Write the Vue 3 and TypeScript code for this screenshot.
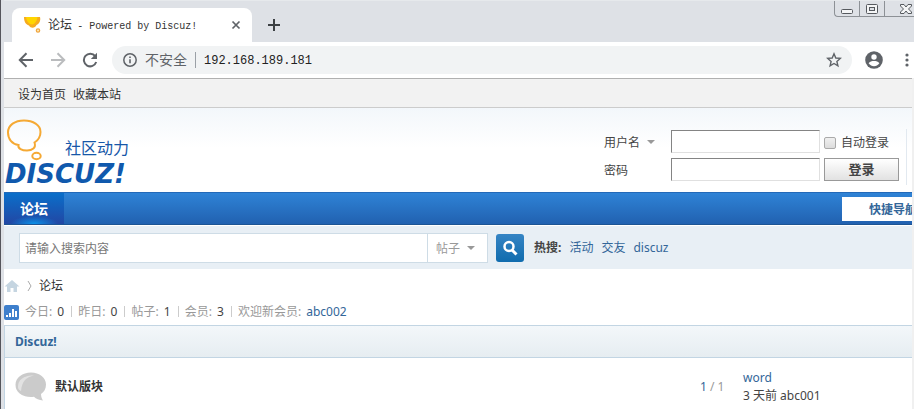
<script setup lang="ts">
import { ref } from 'vue'

interface Stat {
  label: string
  value: string
}

const username = ref('')
const password = ref('')
const remember = ref(false)
const keyword = ref('')

const stats: Stat[] = [
  { label: '今日', value: '0' },
  { label: '昨日', value: '0' },
  { label: '帖子', value: '1' },
  { label: '会员', value: '3' },
  { label: '欢迎新会员', value: 'abc002' },
]
const hotWords: string[] = ['活动', '交友', 'discuz']
</script>

<template>
  <div class="window">
    <header class="chrome">
      <div class="tabstrip">
        <div class="tab">
          <svg class="favicon" width="18" height="18" viewBox="0 0 18 18" aria-hidden="true">
            <path d="M1 1H17C18 5 16 8 13.500 9C12 12.500 7.500 12.500 6 9.500C2.500 8.500 1 5 1 1Z" fill="#f6ab1e" />
            <path d="M3 1H14.500C14 5 12 8 9 8.500C5.500 8 3.500 5 3 1Z" fill="#ffd500" />
            <circle cx="15" cy="14.500" r="1.700" fill="#fde6b0" stroke="#f0a640" stroke-width="1.200" />
          </svg>
          <span class="tab-title">论坛 <span class="mono">- Powered by Discuz!</span></span>
          <button class="icon-btn" type="button" aria-label="关闭标签页">
            <svg width="10" height="10" viewBox="0 0 10 10"><path d="M1.500 1.500L8.500 8.500M8.500 1.500L1.500 8.500" stroke="#5f6368" stroke-width="1.700" /></svg>
          </button>
        </div>
        <button class="icon-btn new-tab" type="button" aria-label="新标签页">
          <svg width="12" height="12" viewBox="0 0 12 12"><path d="M6 0V12M0 6H12" stroke="#3c4043" stroke-width="2" /></svg>
        </button>
        <div class="win-controls">
          <button type="button" aria-label="最小化">
            <svg width="12" height="16" viewBox="0 0 12 16"><rect x=".5" y="8.500" width="11" height="4" rx="1" fill="#f4f5f6" stroke="#55595e" /></svg>
          </button>
          <button type="button" aria-label="最大化">
            <svg width="12" height="16" viewBox="0 0 12 16"><rect x=".5" y="3.500" width="11" height="9" rx="1" fill="#f4f5f6" stroke="#55595e" /><rect x="3.500" y="6.500" width="5" height="3" fill="#dee1e6" stroke="#55595e" /></svg>
          </button>
          <button type="button" class="win-close" aria-label="关闭">
            <svg width="12" height="16" viewBox="0 0 12 16"><path d="M.5 3.500H4L6 6L8 3.500H11.500V5L8.500 8L11.500 11V12.500H8L6 10L4 12.500H.5V11L3.500 8L.5 5Z" fill="#f4f5f6" stroke="#55595e" /></svg>
          </button>
        </div>
      </div>
      <div class="toolbar">
        <button class="icon-btn" type="button" aria-label="后退">
          <svg width="16" height="16" viewBox="0 0 16 16" fill="none" stroke="#5f6368" stroke-width="2"><path d="M15 8H2M8.500 1.300L1.800 8L8.500 14.700" /></svg>
        </button>
        <button class="icon-btn" type="button" aria-label="前进">
          <svg width="16" height="16" viewBox="0 0 16 16" fill="none" stroke="#babcbe" stroke-width="2"><path d="M1 8H14M7.500 1.300L14.200 8L7.500 14.700" /></svg>
        </button>
        <button class="icon-btn" type="button" aria-label="刷新">
          <svg width="16" height="16" viewBox="0 0 16 16" fill="none"><path d="M13.200 4.200A6.300 6.300 0 1 0 14.200 10" stroke="#5f6368" stroke-width="2" /><path d="M15 .8V7H8.800Z" fill="#5f6368" /></svg>
        </button>
        <div class="omnibox">
          <svg width="14" height="14" viewBox="0 0 14 14" fill="none"><circle cx="7" cy="7" r="6.200" stroke="#5f6368" stroke-width="1.500" /><path d="M7 6.200V10.300M7 3.600V5.100" stroke="#5f6368" stroke-width="1.600" /></svg>
          <span class="insecure">不安全</span>
          <span class="url mono">192.168.189.181</span>
          <button class="icon-btn" type="button" aria-label="收藏">
            <svg width="16" height="16" viewBox="0 0 16 16"><path d="M8 1.800L9.800 6L14.300 6.400L10.900 9.400L11.900 13.900L8 11.500L4.100 13.900L5.100 9.400L1.700 6.400L6.200 6Z" fill="none" stroke="#5f6368" stroke-width="1.400" /></svg>
          </button>
        </div>
        <button class="icon-btn" type="button" aria-label="用户">
          <svg width="18" height="18" viewBox="0 0 18 18"><circle cx="9" cy="9" r="8.800" fill="#5f6368" /><circle cx="9" cy="6" r="2.700" fill="#fff" /><path d="M3.600 12.200C4.500 10.500 7 9.900 9 9.900S13.500 10.500 14.400 12.200C13 14.300 11 15.200 9 15.200S5 14.300 3.600 12.200Z" fill="#fff" /></svg>
        </button>
        <button class="icon-btn menu" type="button" aria-label="菜单">
          <svg width="4" height="16" viewBox="0 0 4 16" fill="#5f6368"><circle cx="2" cy="3" r="1.600" /><circle cx="2" cy="8" r="1.600" /><circle cx="2" cy="13" r="1.600" /></svg>
        </button>
      </div>
    </header>

    <div class="page">
      <div class="topbar">
        <a href="#">设为首页</a>
        <a href="#">收藏本站</a>
      </div>

      <div class="masthead">
        <a class="logo" href="#" aria-label="Discuz! 社区动力">
          <svg width="134" height="76" viewBox="0 0 134 76">
            <g fill="none" stroke="#f5a934" stroke-width="2">
              <path d="M14.500 31C8 30 4 25 4 18.500C4 11 11 6.500 20 6.500S36.500 11 36.500 18C36.500 22 34.500 26 30.500 28.500C32.500 34 28 36.500 23 36.500S13.500 34.500 14.500 31Z" />
              <ellipse cx="32.500" cy="42" rx="4.200" ry="3.200" />
            </g>
            <text class="logo-tag" x="61" y="40">社区动力</text>
            <text class="logo-name" x="1" y="69">DISCUZ!</text>
          </svg>
        </a>
        <form class="login" @submit.prevent>
          <label class="field-label" for="username">用户名 <i class="caret"></i></label>
          <input id="username" v-model="username" class="field" type="text" />
          <label class="remember"><input v-model="remember" type="checkbox" />自动登录</label>
          <label class="field-label" for="password">密码</label>
          <input id="password" v-model="password" class="field" type="password" />
          <button class="submit" type="submit">登录</button>
        </form>
      </div>

      <nav class="nav">
        <a class="nav-item" href="#">论坛</a>
        <button class="quick" type="button">快捷导航</button>
      </nav>

      <form class="search" @submit.prevent>
        <div class="search-box">
          <input v-model="keyword" type="text" placeholder="请输入搜索内容" aria-label="请输入搜索内容" />
          <button class="search-type" type="button">帖子 <i class="caret"></i></button>
        </div>
        <button class="search-btn" type="submit" aria-label="搜索">
          <svg width="28" height="28" viewBox="0 0 28 28" fill="none" stroke="#fff"><circle cx="13" cy="12.500" r="4.500" stroke-width="2.500" /><path d="M16 16L20.500 20.500" stroke-width="3" /></svg>
        </button>
        <div class="hot">
          <strong>热搜:</strong>
          <a v-for="word in hotWords" :key="word" href="#">{{ word }}</a>
        </div>
      </form>

      <div class="crumbs">
        <a href="#" aria-label="首页">
          <svg width="16" height="14" viewBox="0 0 16 14"><path d="M8 1L15.500 7.500H13V13H9.500V9H6.500V13H3V7.500H.5Z" fill="#c5d5e1" /></svg>
        </a>
        <svg width="5" height="12" viewBox="0 0 5 12" fill="none" stroke="#aaa"><path d="M1 1L4 6L1 11" /></svg>
        <a href="#">论坛</a>
      </div>

      <div class="stats">
        <svg width="15" height="15" viewBox="0 0 15 15"><rect width="15" height="15" rx="2" fill="#3e7fcc" /><path d="M2 10H4V12H2ZM5 8H7V12H5ZM8 4H10V12H8ZM11 6H13V12H11Z" fill="#fff" /></svg>
        <ul>
          <li v-for="stat in stats" :key="stat.label">{{ stat.label }}: <em>{{ stat.value }}</em></li>
        </ul>
      </div>

      <section class="forum">
        <h2><a href="#">Discuz!</a></h2>
        <table>
          <tbody>
            <tr>
              <td class="col-icon">
                <svg width="32" height="29" viewBox="0 0 32 29">
                  <path d="M16 .5C24.500 .5 31 5.500 31 12.500C31 17 29 20 26 22C26 25 27 27 28 28.500C24 28 21 27 19 24.800C8 26 .5 21 .5 12.800C.5 5.500 7.500 .5 16 .5Z" fill="#cbcbcb" />
                  <path d="M3 15C3 8 8 3.500 19 3.500C11 5.500 7 9 6 19C4 18 3 17 3 15Z" fill="#e2e2e2" />
                </svg>
              </td>
              <td class="col-name"><a href="#">默认版块</a></td>
              <td class="col-count"><b>1</b> / 1</td>
              <td class="col-last"><a href="#">word</a><br />3 天前 <span>abc001</span></td>
            </tr>
          </tbody>
        </table>
      </section>
    </div>
  </div>
</template>

<style>
body {
  margin: 0;
  overflow: hidden;
  background: #f0f0f0;
}
</style>

<style scoped>
* {
  box-sizing: border-box;
}
.window {
  display: flex;
  flex-direction: column;
  min-height: 100vh;
  border-left: 1px solid #55555c;
  padding-left: 3px;
  background: #dee1e6;
  color: #444;
  font: 12px/18px 'Noto Sans', 'Noto Sans CJK SC', sans-serif;
}
a {
  color: inherit;
  text-decoration: none;
}
button {
  font: inherit;
  color: inherit;
  padding: 0;
  border: 0;
  background: none;
}
svg {
  display: block;
  flex: none;
}
.mono {
  font-family: 'Liberation Mono', monospace;
}
.tabstrip {
  display: flex;
  align-items: flex-end;
  height: 42px;
  padding-left: 8px;
  border-top: 1px solid #e6e9ec;
}
.tab {
  display: flex;
  align-items: center;
  width: 240px;
  height: 34px;
  padding: 0 11px;
  border-radius: 8px 8px 0 0;
  background: #fff;
}
.tab-title {
  flex: 1;
  margin-left: 7px;
  padding-top: 2px;
  color: #333;
  white-space: nowrap;
}
.tab-title .mono {
  margin-left: 2px;
  font-size: 10px;
}
.new-tab {
  margin: 0 16px 11px;
}
.win-controls {
  display: flex;
  align-self: flex-start;
  margin-left: auto;
  height: 16px;
  overflow: hidden;
  border: 1px solid #8d9196;
  border-width: 0 0 1px 1px;
  border-bottom-left-radius: 4px;
}
.win-controls button {
  display: flex;
  justify-content: center;
  width: 25px;
  border-right: 1px solid #8d9196;
}
.win-controls .win-close {
  width: 29px;
  padding-left: 12px;
  border: 0;
}
.toolbar {
  display: flex;
  align-items: center;
  gap: 16px;
  height: 36px;
  padding: 0 5px 0 14px;
  background: #fff;
}
.menu {
  margin-left: 6px;
}
.omnibox {
  display: flex;
  align-items: center;
  flex: 1;
  height: 28px;
  margin: 0 -3px 0 -2px;
  padding: 0 10px 0 11px;
  border-radius: 14px;
  background: #f1f3f4;
}
.insecure {
  margin-left: 8px;
  padding-right: 8px;
  border-right: 1px solid #9aa0a6;
  color: #5f6368;
  font-size: 14px;
  line-height: 16px;
}
.url {
  flex: 1;
  margin-left: 8px;
  padding-top: 2px;
  color: #222;
}
.page {
  flex: 1;
  display: flex;
  flex-direction: column;
  border-right: 2px solid #f0f0f0;
  background: #fff;
}
.topbar {
  display: flex;
  align-items: center;
  gap: 7px;
  height: 30px;
  padding: 3px 0 0 14px;
  border-top: 1px solid #b0b0b0;
  border-bottom: 1px solid #ccc;
  background: #f2f2f2;
  color: #333;
}
.masthead {
  display: flex;
  justify-content: space-between;
  height: 84px;
  background: linear-gradient(#f3f7fb, #fff 40px);
}
.logo {
  padding-top: 6px;
}
.logo-tag {
  fill: #1657a8;
  font: 16px 'Liberation Sans', 'Noto Sans CJK SC', sans-serif;
}
.logo-name {
  fill: #1059ad;
  font: italic bold 26px 'DejaVu Sans', sans-serif;
}
.login {
  display: grid;
  grid-template-columns: 63px 149px 75px;
  grid-auto-rows: 24px;
  align-items: center;
  align-content: start;
  gap: 4px;
  height: 56px;
  margin: 21px 5px 0 0;
  padding-right: 7px;
  border-right: 1px solid #e2e9f0;
}
.login > * {
  min-width: 0;
}
.field-label,
.remember {
  padding-top: 4px;
}
.field {
  width: 100%;
  height: 23px;
  border: 1px solid #dfdfdf;
  border-color: #848484 #e0e0e0 #e0e0e0 #848484;
  background: #fff;
}
.caret {
  display: inline-block;
  margin-left: 4px;
  border: 4px solid transparent;
  border-top-color: #999;
  border-bottom: 0;
  vertical-align: 3px;
}
.remember {
  display: flex;
  align-items: center;
  gap: 5px;
  white-space: nowrap;
}
.remember input {
  appearance: none;
  flex: none;
  width: 12px;
  height: 12px;
  margin: 0;
  border: 1px solid #aaa;
  border-radius: 2px;
  background: linear-gradient(#f0f0f0, #dcdcdc);
}
.submit {
  height: 23px;
  border: 1px solid #999;
  background: linear-gradient(#fff, #e2e2e2);
  font-size: 13px;
  font-weight: bold;
}
.nav {
  display: flex;
  align-items: center;
  justify-content: space-between;
  height: 33px;
  border-top: 1px solid #2369b8;
  border-bottom: 1px solid #1c5493;
  background: linear-gradient(#2f83d6, #2161b0);
}
.nav-item {
  align-self: stretch;
  width: 60px;
  background: radial-gradient(ellipse 24px 8px at 50% 100%, #0a93ea, transparent), linear-gradient(#0a6fca, #2247a4);
  color: #fff;
  font-size: 14px;
  font-weight: bold;
  line-height: 32px;
  text-align: center;
}
.quick {
  width: 70px;
  height: 24px;
  padding: 2px 0 0 27px;
  overflow: hidden;
  background: #fff;
  color: #369;
  font-weight: bold;
  text-align: left;
  white-space: nowrap;
}
.search {
  display: flex;
  align-items: center;
  height: 43px;
  margin-top: 1px;
  padding-left: 15px;
  background: #e8eff5;
}
.search-box {
  display: flex;
  width: 469px;
  height: 30px;
  border: 1px solid #cedce6;
  background: #fff;
}
.search-box input {
  flex: 1;
  min-width: 0;
  padding: 3px 5px 0;
  border: 0;
  outline: 0;
  font: inherit;
}
.search-box input::placeholder {
  color: #777;
}
.search-type {
  width: 60px;
  padding: 3px 4px 0 0;
  border-left: 1px solid #cedce6;
  color: #999;
}
.search-btn {
  width: 28px;
  height: 28px;
  margin-left: 8px;
  border-radius: 3px;
  background: linear-gradient(#3584c4, #106cae);
}
.hot {
  display: flex;
  gap: 8px;
  margin-left: 10px;
  padding-top: 1px;
  color: #369;
}
.hot strong {
  color: #444;
}
.crumbs {
  display: flex;
  align-items: center;
  gap: 7px;
  height: 34px;
  color: #333;
}
.stats {
  display: flex;
  align-items: center;
  gap: 6px;
  height: 18px;
  margin-bottom: 4px;
  color: #999;
}
.stats ul {
  display: flex;
  margin: 0;
  padding: 0;
  list-style: none;
}
.stats li + li {
  margin-left: 7px;
}
.stats li + li::before {
  content: '';
  display: inline-block;
  height: 11px;
  margin-right: 6px;
  border-left: 1px solid #ccc;
  vertical-align: -1px;
}
.stats em {
  margin-left: 2px;
  color: #444;
  font-style: normal;
}
.stats li:last-child em {
  color: #369;
}
.forum {
  flex: 1;
  border: 1px solid #c2d5e3;
  border-width: 1px 0 0 1px;
}
.forum h2 {
  height: 32px;
  margin: 0;
  padding-left: 10px;
  border-bottom: 1px solid #c2d5e3;
  background: linear-gradient(#f3f7fa, #e6edf1);
  color: #369;
  font-size: 12px;
  line-height: 31px;
}
.forum table {
  width: 100%;
  border-collapse: collapse;
}
.forum td {
  height: 56px;
  padding: 2px 0 0;
}
.forum .col-icon {
  width: 50px;
  padding: 0 0 0 10px;
}
.col-name {
  color: #333;
  font-weight: bold;
}
.forum .col-count {
  width: 43px;
  color: #999;
}
.col-count b {
  color: #369;
  font-weight: normal;
}
.forum .col-last {
  width: 169px;
}
.col-last a {
  color: #369;
}
</style>
